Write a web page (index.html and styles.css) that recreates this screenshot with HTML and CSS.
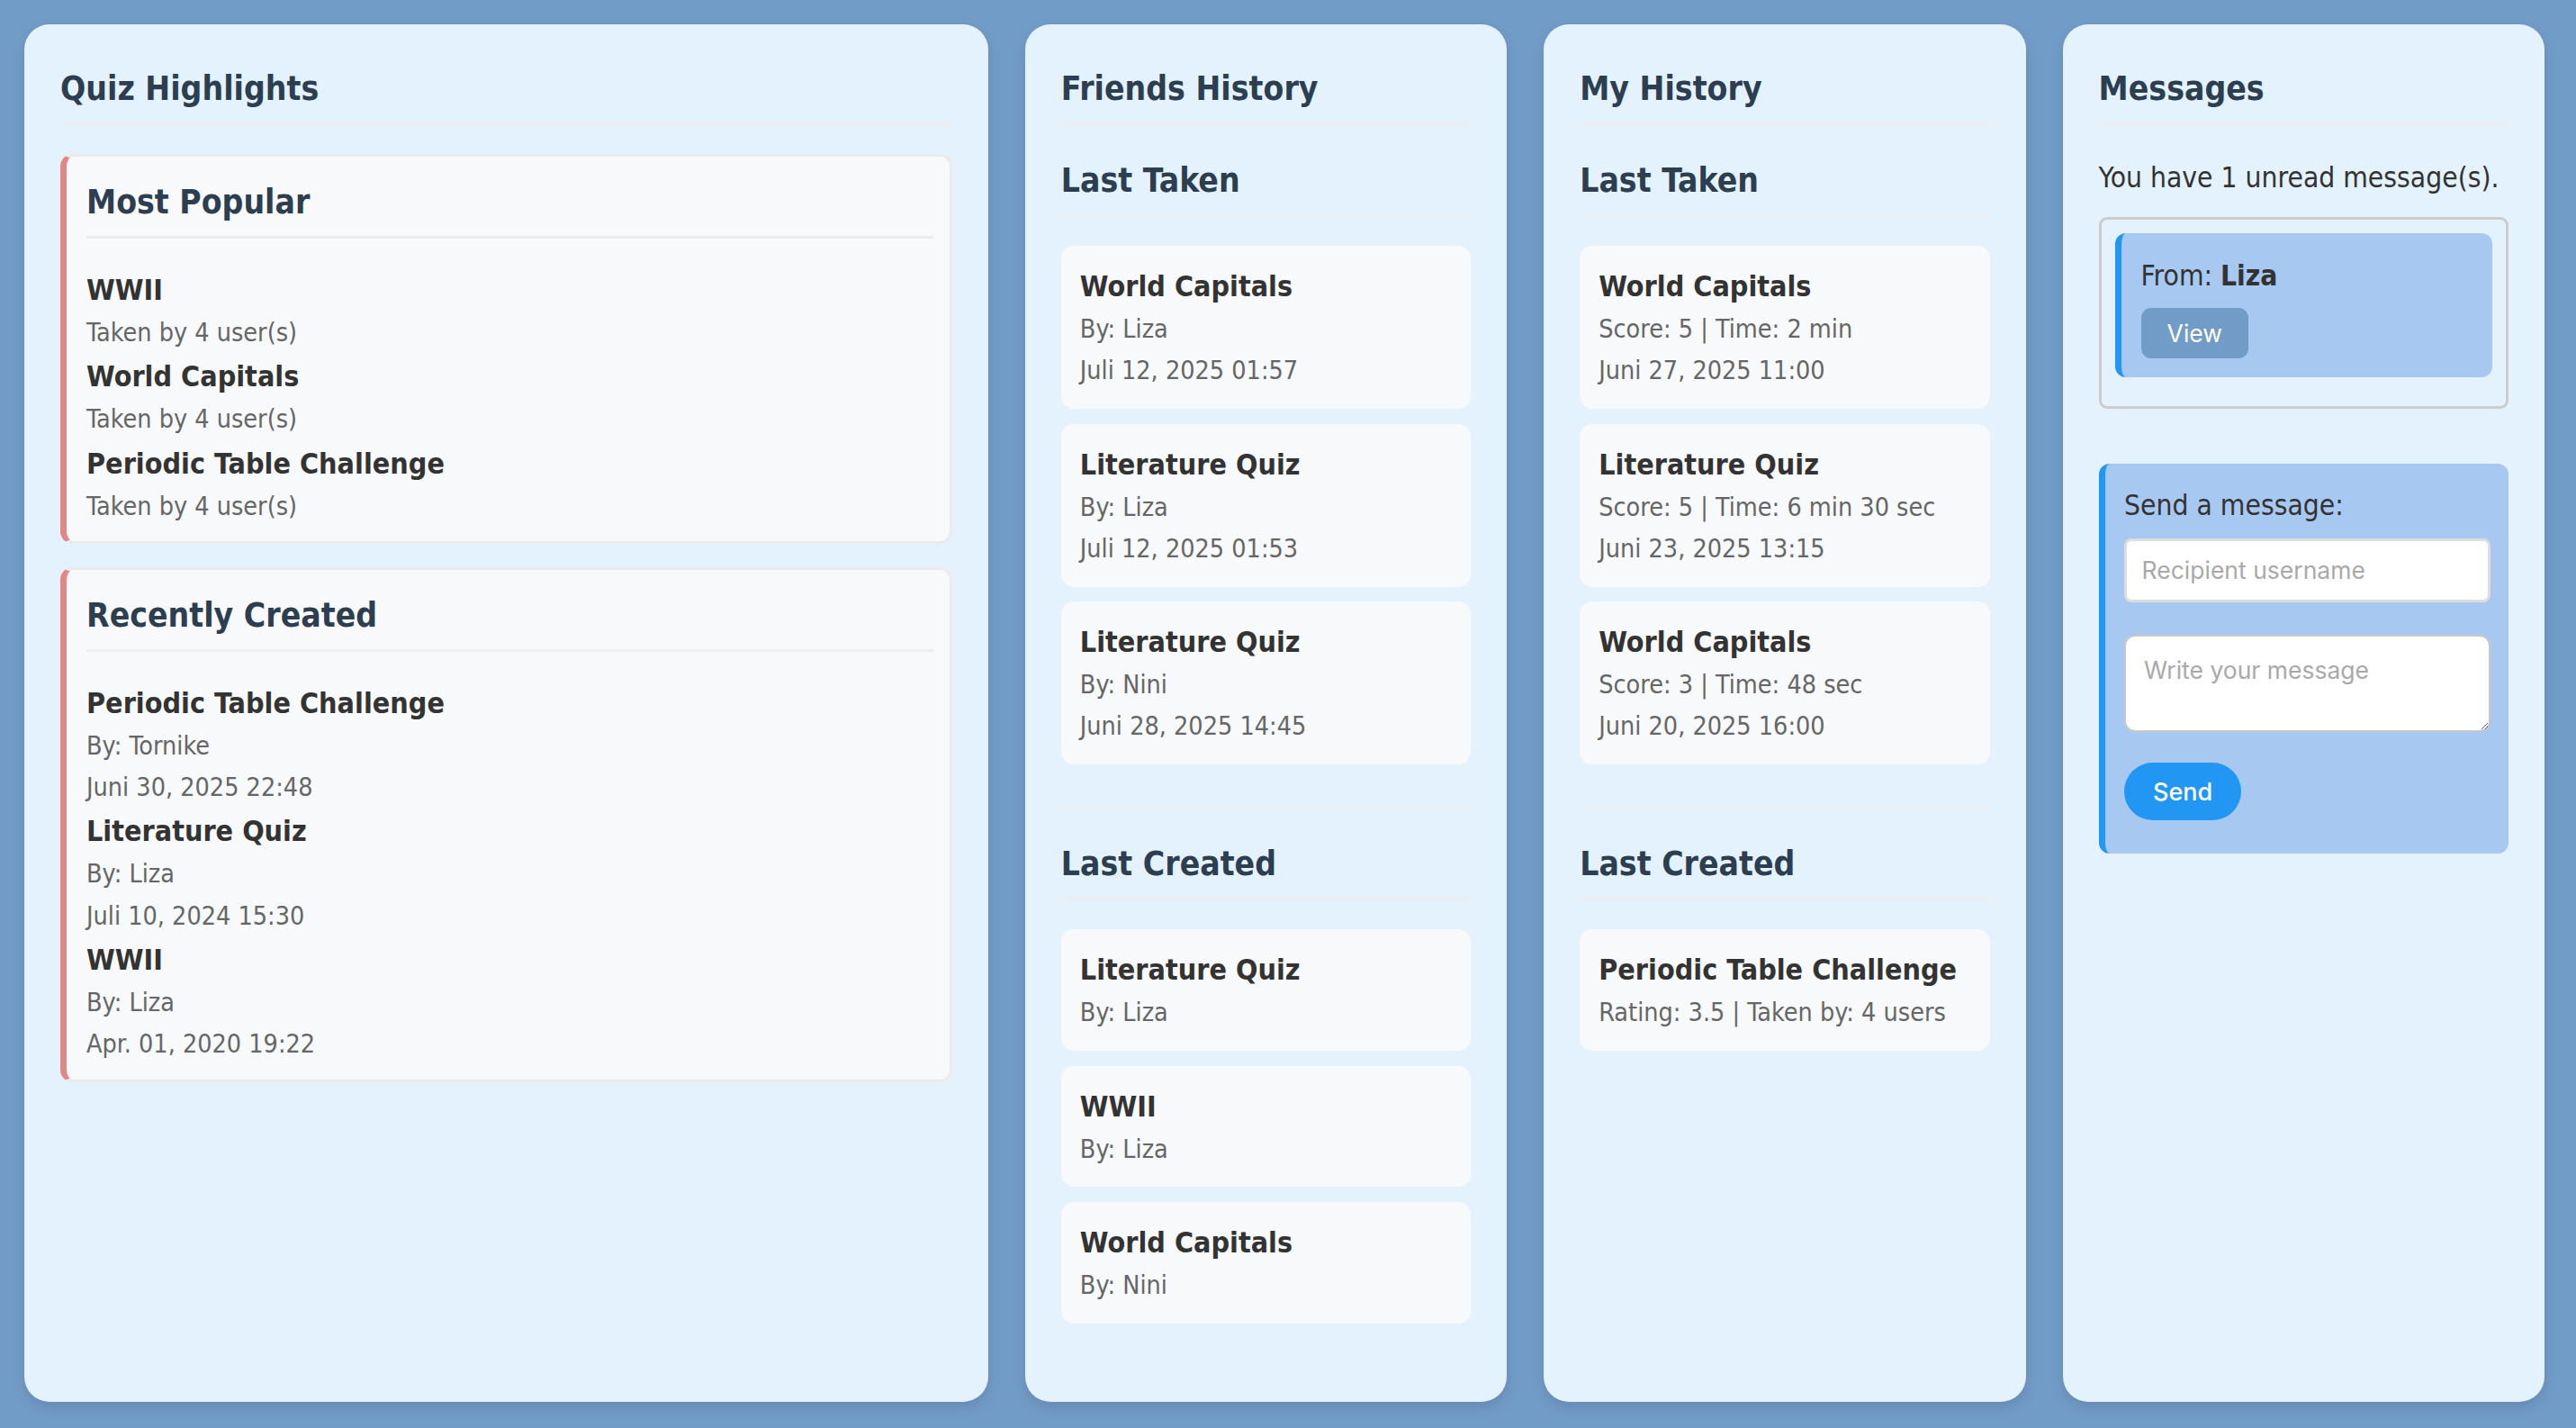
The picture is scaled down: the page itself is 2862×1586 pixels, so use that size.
FILE: index.html
```html
<!DOCTYPE html>
<html lang="en">
<head>
<meta charset="utf-8">
<title>Quiz Dashboard</title>
<link rel="stylesheet" href="styles.css">
</head>
<body>
<main class="dashboard">
  <section class="panel">
    <h2 class="panel-title">Quiz Highlights</h2>
    <div class="highlight-card">
      <h3 class="card-heading">Most Popular</h3>
      <ul class="item-list">
        <li><div class="item-title">WWII</div><div class="item-meta">Taken by 4 user(s)</div></li>
        <li><div class="item-title">World Capitals</div><div class="item-meta">Taken by 4 user(s)</div></li>
        <li><div class="item-title">Periodic Table Challenge</div><div class="item-meta">Taken by 4 user(s)</div></li>
      </ul>
    </div>
    <div class="highlight-card">
      <h3 class="card-heading">Recently Created</h3>
      <ul class="item-list">
        <li><div class="item-title">Periodic Table Challenge</div><div class="item-meta">By: Tornike</div><div class="item-meta">Juni 30, 2025 22:48</div></li>
        <li><div class="item-title">Literature Quiz</div><div class="item-meta">By: Liza</div><div class="item-meta">Juli 10, 2024 15:30</div></li>
        <li><div class="item-title">WWII</div><div class="item-meta">By: Liza</div><div class="item-meta">Apr. 01, 2020 19:22</div></li>
      </ul>
    </div>
  </section>

  <section class="panel">
    <h2 class="panel-title">Friends History</h2>
    <div class="history-section">
      <h3 class="section-title">Last Taken</h3>
      <div class="entry-list">
        <div class="entry-card"><div class="item-title">World Capitals</div><div class="item-meta">By: Liza</div><div class="item-meta">Juli 12, 2025 01:57</div></div>
        <div class="entry-card"><div class="item-title">Literature Quiz</div><div class="item-meta">By: Liza</div><div class="item-meta">Juli 12, 2025 01:53</div></div>
        <div class="entry-card"><div class="item-title">Literature Quiz</div><div class="item-meta">By: Nini</div><div class="item-meta">Juni 28, 2025 14:45</div></div>
      </div>
    </div>
    <div class="history-section">
      <h3 class="section-title">Last Created</h3>
      <div class="entry-list">
        <div class="entry-card"><div class="item-title">Literature Quiz</div><div class="item-meta">By: Liza</div></div>
        <div class="entry-card"><div class="item-title">WWII</div><div class="item-meta">By: Liza</div></div>
        <div class="entry-card"><div class="item-title">World Capitals</div><div class="item-meta">By: Nini</div></div>
      </div>
    </div>
  </section>

  <section class="panel">
    <h2 class="panel-title">My History</h2>
    <div class="history-section">
      <h3 class="section-title">Last Taken</h3>
      <div class="entry-list">
        <div class="entry-card"><div class="item-title">World Capitals</div><div class="item-meta">Score: 5 | Time: 2 min</div><div class="item-meta">Juni 27, 2025 11:00</div></div>
        <div class="entry-card"><div class="item-title">Literature Quiz</div><div class="item-meta">Score: 5 | Time: 6 min 30 sec</div><div class="item-meta">Juni 23, 2025 13:15</div></div>
        <div class="entry-card"><div class="item-title">World Capitals</div><div class="item-meta">Score: 3 | Time: 48 sec</div><div class="item-meta">Juni 20, 2025 16:00</div></div>
      </div>
    </div>
    <div class="history-section">
      <h3 class="section-title">Last Created</h3>
      <div class="entry-list">
        <div class="entry-card"><div class="item-title">Periodic Table Challenge</div><div class="item-meta">Rating: 3.5 | Taken by: 4 users</div></div>
      </div>
    </div>
  </section>

  <section class="panel">
    <h2 class="panel-title">Messages</h2>
    <p class="unread">You have 1 unread message(s).</p>
    <div class="inbox">
      <div class="message-card">
        <div class="message-from">From: <strong>Liza</strong></div>
        <button class="btn-view" type="button">View</button>
      </div>
    </div>
    <form class="compose">
      <label class="compose-label" for="recipient">Send a message:</label>
      <input class="compose-input" id="recipient" type="text" placeholder="Recipient username">
      <textarea class="compose-text" placeholder="Write your message"></textarea>
      <button class="btn-send" type="button">Send</button>
    </form>
  </section>
</main>
</body>
</html>
```
FILE: styles.css
```css
* {
  box-sizing: border-box;
}

html, body {
  margin: 0;
  height: 100%;
}

body {
  background: #729cc8;
  font-family: "DejaVu Sans Condensed", "DejaVu Sans", sans-serif;
  font-stretch: condensed;
  color: #333;
}

.dashboard {
  height: 100vh;
  padding: 27px 35px 29px 27px;
  display: grid;
  grid-template-columns: 2fr 1fr 1fr 1fr;
  gap: 41px;
}

.panel {
  background: #e3f2fd;
  border-radius: 28px;
  padding: 40px 40px;
  box-shadow: 0 6px 16px rgba(0, 0, 0, 0.12);
  overflow: hidden;
}

.panel-title,
.card-heading,
.section-title {
  font-size: 37px;
  line-height: 44px;
  font-weight: bold;
  color: #2c3e50;
  padding-bottom: 15px;
  border-bottom: 3px solid #eeeeee;
}

.panel-title {
  margin: 10px 0 32px;
}

.section-title {
  margin: 40px 0 32px;
}

.card-heading {
  margin: 0 0 32px;
}

.highlight-card {
  background: #f8f9fa;
  border: 3px solid #ebebeb;
  border-left: 7px solid #e38686;
  border-radius: 14px;
  padding: 29px 18px 15px 22px;
  margin-bottom: 26px;
}

.item-list {
  list-style: none;
  margin: 0;
  padding: 0;
}

.item-title {
  font-size: 32px;
  line-height: 50px;
  font-weight: bold;
  color: #333;
}

.item-meta {
  font-size: 28.5px;
  line-height: 46.3px;
  color: #666;
}

.history-section + .history-section {
  border-top: 3px solid #eeeeee;
  margin-top: 46px;
}

.entry-list {
  display: flex;
  flex-direction: column;
  gap: 16.5px;
}

.entry-card {
  background: #f8f9fa;
  border-radius: 14px;
  padding: 20px 20px 18.5px 21px;
}

.unread {
  font-size: 31.5px;
  line-height: 48px;
  color: #333;
  margin: 34px 0 19.5px;
}

.inbox {
  border: 3.5px solid #cccccc;
  border-radius: 9px;
  padding: 15.5px;
}

.message-card {
  background: #a7c8f1;
  border-left: 7px solid #2196f3;
  border-radius: 12px;
  padding: 22.5px 20px 20.5px 21.5px;
  margin-bottom: 16.5px;
}

.message-from {
  font-size: 31.5px;
  line-height: 48px;
  color: #333;
  margin-bottom: 12.5px;
}

.btn-view {
  display: inline-block;
  height: 56px;
  padding: 0 29px;
  border: none;
  border-radius: 11px;
  background: #729cc8;
  color: #fff;
  font-family: Inter, "Liberation Sans", sans-serif;
  font-size: 26.5px;
  line-height: 56px;
}

.compose {
  margin-top: 61px;
  background: #a7c8f1;
  border-left: 7px solid #2196f3;
  border-radius: 12px;
  padding: 22.5px 20px 36.5px 21.5px;
  display: flex;
  flex-direction: column;
  align-items: flex-start;
}

.compose-label {
  font-size: 31.5px;
  line-height: 48px;
  color: #333;
  margin-bottom: 12.5px;
}

.compose-input {
  width: 100%;
  height: 71px;
  border: 3.6px solid #dddddd;
  border-radius: 8px;
  background: #fff;
  padding: 0 16.5px;
  font-family: Inter, "Liberation Sans", sans-serif;
  font-size: 26.5px;
  color: #333;
  margin-bottom: 36px;
}

.compose-text {
  display: block;
  width: 100%;
  height: 108px;
  border: 2px solid #c8c8c8;
  border-radius: 12px;
  background: #fff;
  padding: 21px 20px;
  font-family: Inter, "Liberation Sans", sans-serif;
  font-size: 26.5px;
  color: #333;
  margin-bottom: 34.5px;
}

.compose-input::placeholder,
.compose-text::placeholder {
  color: #a9a9a9;
}

.btn-send {
  height: 64px;
  width: 130px;
  border: none;
  border-radius: 32px;
  background: #2196f3;
  color: #fff;
  font-family: Inter, "Liberation Sans", sans-serif;
  font-size: 27px;
  font-weight: 500;
}
```
